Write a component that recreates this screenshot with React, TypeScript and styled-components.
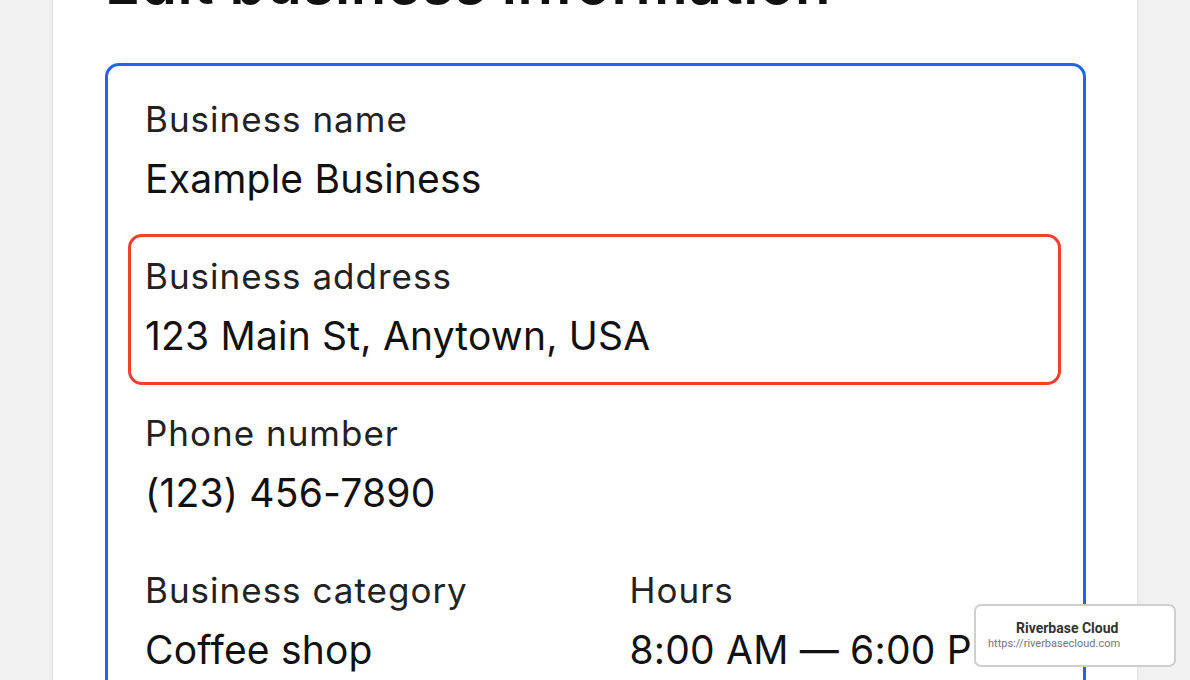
import styled, { createGlobalStyle } from "styled-components"

const GlobalStyle = createGlobalStyle`
    html, body {
        margin: 0;
        padding: 0;
        background: #f2f2f2;
        overflow: hidden;
    }
    body {
        font-family: Inter, "Noto Sans", "DejaVu Sans", sans-serif;
        color: #1b1b1b;
    }
`

const fields = [
    { label: "Business name", value: "Example Business" },
    { label: "Business address", value: "123 Main St, Anytown, USA", highlighted: true },
    { label: "Phone number", value: "(123) 456-7890" },
]

export default function App() {
    return (
        <>
            <GlobalStyle />
            <Page>
                <Card>
                    <Heading>Edit business information</Heading>
                    <InfoBox>
                        {fields.map((f) => (
                            <Field key={f.label} $highlighted={f.highlighted}>
                                <Label>{f.label}</Label>
                                <Value>{f.value}</Value>
                            </Field>
                        ))}
                        <Field>
                            <TwoCols>
                                <div>
                                    <Label>Business category</Label>
                                    <Value>Coffee shop</Value>
                                </div>
                                <div>
                                    <Label>Hours</Label>
                                    <Value>8:00 AM — 6:00 PM</Value>
                                </div>
                            </TwoCols>
                        </Field>
                    </InfoBox>
                </Card>
            </Page>
            <Badge>
                <BadgeTitle>Riverbase Cloud</BadgeTitle>
                <BadgeUrl>https://riverbasecloud.com</BadgeUrl>
            </Badge>
        </>
    )
}

const Page = styled.div`
    height: 680px;
    overflow: hidden;
    padding: 0 52px;
`

// page is scrolled down a bit, heading sits mostly above the fold
const Card = styled.div`
    margin-top: -49px;
    background: #fff;
    border-left: 1px solid #e4e4e4;
    border-right: 1px solid #e4e4e4;
    box-shadow: 0 0 6px rgba(0, 0, 0, 0.06);
    padding: 0 51px 40px 52px;
    min-height: 900px;
`

const Heading = styled.h1`
    margin: 0;
    font-size: 58px;
    line-height: 64px;
    font-weight: 600;
    letter-spacing: 0.6px;
    color: #111;
    padding-bottom: 48px;
`

const InfoBox = styled.div`
    border: 3px solid #1e64f7;
    border-radius: 14px;
    padding: 11px 22px 20px 20px;
    display: flex;
    flex-direction: column;
    gap: 6px;
`

const Field = styled.div<{ $highlighted?: boolean }>`
    border: 3px solid ${(p) => (p.$highlighted ? "#f2402f" : "transparent")};
    border-radius: 14px;
    padding: 19px 14px 23px;
`

const Label = styled.div`
    font-size: 35px;
    line-height: 40px;
    color: #222;
    letter-spacing: 1px;
`

const Value = styled.div`
    margin-top: 17px;
    font-size: 39px;
    line-height: 46px;
    color: #111;
    letter-spacing: 0.2px;
    white-space: nowrap;
`

const TwoCols = styled.div`
    display: grid;
    grid-template-columns: 1fr 1fr;
    column-gap: 70px;
`

const Badge = styled.div`
    position: fixed;
    right: 14px;
    bottom: 13px;
    width: 198px;
    height: 59px;
    background: #fff;
    border: 2px solid #cfcfcf;
    border-radius: 7px;
    box-sizing: content-box;
    display: flex;
    flex-direction: column;
    justify-content: center;
    font-family: Roboto, "Liberation Sans", sans-serif;
`

const BadgeTitle = styled.div`
    font-size: 14px;
    font-weight: 700;
    color: #333;
    padding-left: 40px;
    line-height: 17px;
`

const BadgeUrl = styled.div`
    font-size: 11px;
    color: #777;
    padding-left: 12px;
    line-height: 14px;
`
